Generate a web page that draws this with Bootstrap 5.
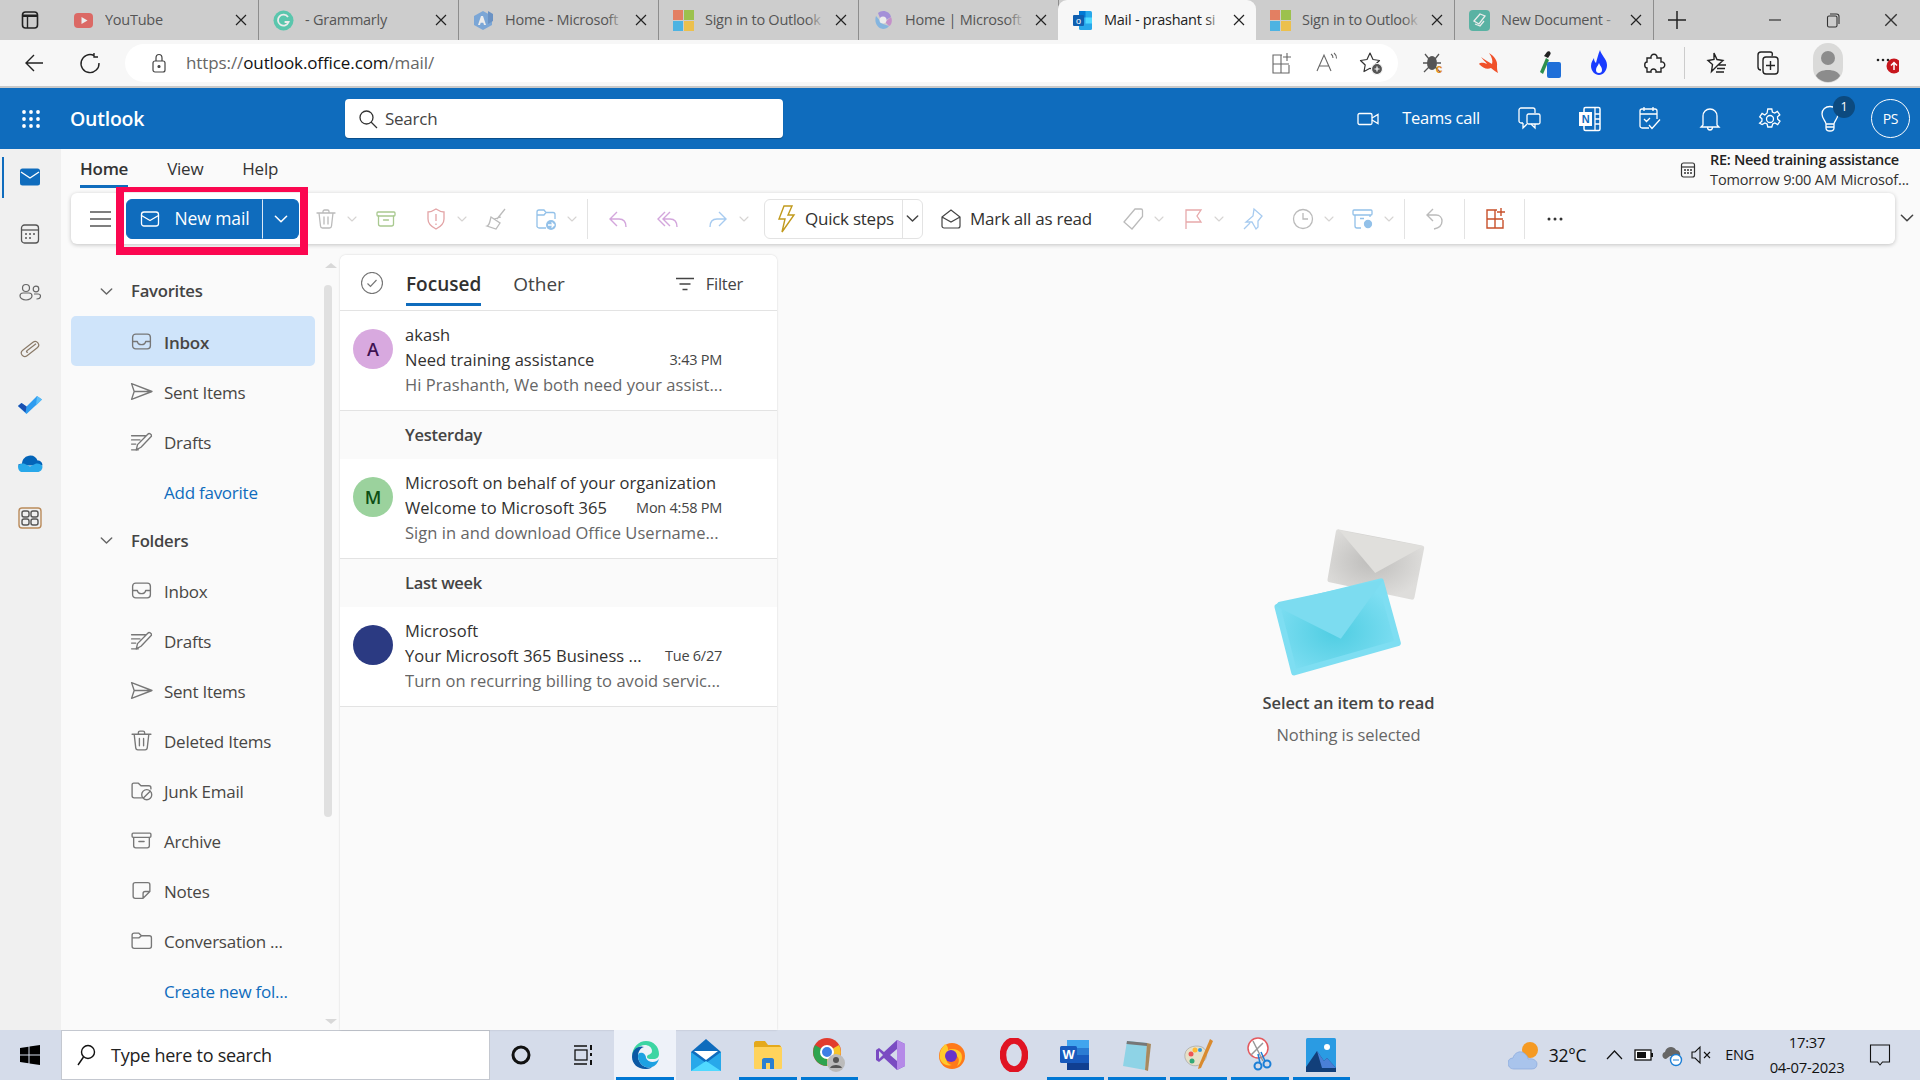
<!DOCTYPE html>
<html lang="en"><head><meta charset="utf-8"><title>Mail - Outlook</title>
<link href="https://cdn.jsdelivr.net/npm/bootstrap@5.3.0/dist/css/bootstrap.min.css" rel="stylesheet">
<style>
html,body{height:1080px;width:1920px;overflow:hidden}
body{font-family:"Open Sans","Noto Sans","Liberation Sans",sans-serif;font-size:16px;color:#323130;background:#fafafa;letter-spacing:-.25px}
svg{display:block;flex:none}
.ic-s{fill:none;stroke:currentColor;stroke-width:1.3;stroke-linecap:round;stroke-linejoin:round}
.app{height:1080px}
.symbols{position:absolute}
.minw0{min-width:0}
.tabstrip{height:40px;background:#cdcdcd;flex:none}
.tog{width:59px;height:40px;color:#222}
.btab{width:200px;height:40px;padding:0 10px 0 14px;color:#555;font-size:14.5px;border-right:1px solid #8d8d8d;background:none}
.btab.on{background:#f7f7f7;color:#222;border-radius:9px 9px 0 0;border-right:0;margin-left:-1px;width:198px}
.btab.aft{width:199px}
.btab .fav{width:21px;height:21px;opacity:.62;margin-right:11px}
.btab.on .fav{opacity:1}
.btab .ttl{flex:1;white-space:pre;overflow:hidden;position:relative}
.btab .ttl::after{content:"";position:absolute;right:0;top:0;bottom:0;width:18px;background:linear-gradient(90deg,transparent,#cdcdcd)}
.btab.on .ttl::after{background:linear-gradient(90deg,transparent,#f7f7f7)}
.btab .xx{width:14px;height:14px;margin-left:9px;color:#222}
.newtab{width:46px;height:40px;color:#222}
.winc{margin-left:auto}
.winc>div{width:58px;height:40px;color:#333}
.addr{height:48px;background:#f7f7f7;border-bottom:2px solid #c9c9c9;flex:none}
.navb{width:60px;color:#222}
.navb.bk{width:55px;margin-left:6px;margin-right:-1px}
.urlpill{width:1273px;height:38px;background:#fff;border-radius:19px;margin-left:5px;padding-left:26px;color:#666;font-size:17px;letter-spacing:-.1px}
.urlpill b{font-weight:400;color:#111}
.urlpill .lk{margin-right:19px;color:#444}
.pillr{margin-left:auto;gap:21px;padding-right:15px;color:#666}
.exts{margin-left:6px;color:#222}
.ext{width:58px}
.ext.e2{width:54px}
.ext.e3{width:64px}
.ext.e4{width:38px}
.ext.e5{width:40px;margin-left:16px}
.xsep{width:1px;height:32px;background:#ccc;margin:0 18px 0 10px}
.x-fav{width:24px}
.x-col{width:30px;margin-left:26px}
.x-prof{width:28px;margin-left:31px}
.x-more{width:40px;margin-left:33px;height:30px}
.oh{height:61px;background:#0f6cbd;color:#fff;flex:none}
.waffle{width:61px}
.brand{width:275px;margin-left:9px;font-size:19.5px;font-weight:600}
.searchb{width:438px;height:39px;background:#fff;border-radius:4px;color:#444;font-size:17px;padding-left:13px;gap:7px;box-shadow:0 1px 1px rgba(0,0,0,.3)}
.hright{margin-left:auto;color:#fff}
.hic{width:60px;position:relative}
.teams{font-size:16.5px;margin:0 20px 0 23px}
.ntf{position:absolute;top:-9px;left:33px;width:22px;height:22px;border-radius:50%;background:#0c4a7f;color:#fff;font-size:12.5px;line-height:22px;text-align:center}
.pers{width:39px;height:39px;border:1.5px solid #fff;border-radius:50%;font-size:14px;margin:0 10px 0 11px}
.rail{width:61px;background:#f0f0f0;flex:none;position:relative;color:#555;padding-right:2px}
.railb{height:57.5px;position:relative}
.railb.on{margin-top:-1px}
.railb.on::before{content:"";position:absolute;left:2px;top:9px;bottom:8px;width:2px;background:#0f6cbd}
.railb.tod{margin-top:-2px;margin-bottom:2px}
.railb.lst{margin-top:-4px}
.ribtabs{height:44px;padding-left:19px;gap:39px;font-size:17px;flex:none;position:relative}
.rtab{height:39px;padding-top:8px;color:#333;line-height:24px;border-bottom:3px solid transparent}
.rtab.on{font-weight:600;border-bottom-color:#0f6cbd}
.remind{margin-left:auto;margin-right:11px;gap:14px;font-size:14.5px;line-height:20px;margin-top:-2px;letter-spacing:-.15px}
.remind .tt{font-weight:600;color:#222;letter-spacing:-.3px}
.tb{height:51px;width:1824px;margin-left:10px;background:#fff;border-radius:6px;box-shadow:0 1px 4px rgba(0,0,0,.22);position:relative;flex:none}
.hmb{width:55px;padding-left:19px;color:#555}
.newbtn{width:173px;height:40px;margin-right:2px}
.newbtn .btn{--bs-btn-bg:#0f6cbd;--bs-btn-border-color:#0f6cbd;--bs-btn-hover-bg:#0f6cbd;--bs-btn-font-size:17.5px;padding:0;display:flex;align-items:center;justify-content:center;letter-spacing:-.1px}
.newbtn .mn{width:137px;gap:13px;padding-left:2px;padding-right:2px}
.newbtn .dd{width:37px;border-left:1px solid #dce9f5}
.rc{width:50px;height:51px;padding-left:14px}
.rc.dde{width:60px}
.rc .chv{margin-left:10px;color:#d6d4d2}
.c-del{color:#bbb}
.c-arc{color:#a9c990}
.ssep{width:1px;height:40px;background:#e3e3e3;margin:0 5px 0 6px}
.ssep.nr{margin:0 5px 0 4px}
.qs{width:159px;height:40px;border:1px solid #e3e3e3;border-radius:6px;margin:0 0 0 11px;font-size:17px;color:#323130;padding-left:10px}
.qs .dv{width:1px;height:40px;background:#e3e3e3;margin-left:auto}
.qs .cc{width:19px;color:#444}
.mar{font-size:17px;gap:8px;margin-left:17px;margin-right:16px;color:#323130}
.hilite{position:absolute;left:45px;top:-6px;width:192px;height:68px;border:solid #fb0750;border-width:5px 8px 8px 8px;pointer-events:none}
.farch{width:25px;padding-top:18px;padding-left:5px;color:#444;height:51px}
.work{min-height:0}
.fnav{width:279px;position:relative;color:#444;flex:none;padding-top:22px}
.fl{--bs-list-group-bg:transparent;--bs-list-group-border-width:0;width:244px;margin-left:10px}
.fl .list-group-item{height:50px;padding:0 0 0 59px;display:flex;align-items:center;gap:11px;font-size:17px;color:#484644;border-radius:5px}
.fl .list-group-item>span{padding-top:4px}
.fl .list-group-item svg{color:#777}
.fl .hdr{height:50px;padding-left:29px;font-weight:600;font-size:16.7px;gap:18px;color:#444}
.fl .hdr svg{color:#666}
.fl .hdr.hdb{height:49px}
.fl .act{background:#cfe4fa;font-weight:600}
.fl .lnk{color:#0f6cbd;padding-left:93px}
.sb{position:absolute;left:263px;top:41px;width:8px;height:532px;background:#e0e0e0;border-radius:4px}
.sba{position:absolute;left:264px;width:0;height:0;border-left:6px solid transparent;border-right:6px solid transparent}
.sba.u{top:19px;border-bottom:5px solid #d8d8d8}
.sba.d{bottom:6px;border-top:5px solid #d8d8d8}
.ml{width:437px;margin-top:11px;flex:none;--bs-card-border-width:0;--bs-card-border-radius:6px;--bs-card-inner-border-radius:6px;background:#fafafa;box-shadow:0 0 2px rgba(0,0,0,.18);overflow:hidden;border-radius:6px 6px 0 0}
.mlh{height:56px;background:#fff;border-bottom:1.5px solid #e3e3e3;padding-left:21px;flex:none;font-size:19px;letter-spacing:0}
.ftab{margin-left:32px;height:46px;padding-top:9px;line-height:30px;border-bottom:3px solid transparent;color:#444}
.ftab.on{margin-left:23px;border-bottom-color:#0f6cbd;font-weight:600;color:#323130}
.ftr{margin-left:auto;margin-right:34px;gap:12px;font-size:16.5px;color:#444;padding-top:3px;letter-spacing:-.25px}
.mg{--bs-list-group-border-width:0}
.grp{height:48px;padding-left:65px;padding-top:1px;background:#fafafa;font-weight:600;color:#444;font-size:16.5px;display:flex;align-items:center}
.mi{height:100px;background:#fff;border-bottom:1.5px solid #e3e3e3;padding:0 0 3px 13px;display:flex;align-items:center;gap:12px;font-size:16.5px;line-height:25px;color:#323130;letter-spacing:.05px}
.ava{width:40px;height:40px;border-radius:50%;font-weight:600;font-size:18px;flex:none;display:flex;align-items:center;justify-content:center;margin-bottom:20px}
.av-a{background:#d8a9df;color:#3f1252}
.av-m{background:#9bd29d;color:#0d4f14}
.av-b{background:#2b3a82}
.mt{width:317px;white-space:nowrap}
.mt .pv{color:#666;overflow:hidden}
.tm{margin-left:auto;font-size:14.5px;color:#444;letter-spacing:-.25px}
.rp{flex:1;padding-top:283px;text-align:center;color:#444;letter-spacing:-.1px}
.rp svg{margin:0 auto 14px}
.rp .a{font-weight:600;font-size:16.5px;line-height:24px;color:#444;margin-bottom:8px}
.rp .b{font-size:16.5px;line-height:24px;color:#666}
.taskb{height:50px;background:#d5dcea;flex:none;color:#111}
.st{width:61px;padding-right:2px}
.tsearch{width:429px;height:50px;background:#fff;border:1px solid #c4c8d0;font-size:18px;padding-left:14px;gap:15px;color:#222}
.tcell{width:61.5px;height:50px;position:relative}
.cort{width:62px}
.tcell.run::after{content:"";position:absolute;left:2px;right:2px;bottom:0;height:3px;background:#0078d4}
.tcell.act{background:#eef2f9}
.tray{margin-left:auto;color:#111}
.tray .tmp{font-size:17.5px;margin:0 14px 0 7px}
.tray .tr{width:29px}
.tray .eng{font-size:14.5px;margin:0 10px 0 9px}
.clk{font-size:14.8px;line-height:25px;text-align:center;width:86px;margin-right:19px}
.ntfb{margin-right:29px}
</style></head>
<body>
<svg class="symbols" width="0" height="0"><defs>
<symbol id="x" viewBox="0 0 14 14"><path d="M2 2l10 10M12 2L2 12" stroke="currentColor" stroke-width="1.2" fill="none"/></symbol>
<symbol id="chv" viewBox="0 0 10 10"><path d="M1 3l4 4 4-4" stroke="currentColor" stroke-width="1.1" fill="none" stroke-linecap="round" stroke-linejoin="round"/></symbol>
<symbol id="inbox" viewBox="0 0 22 22"><g class="ic-s"><rect x="2.5" y="4" width="17" height="14" rx="3"/><path d="M2.5 11h4.5c.4 2 2 3 4 3s3.600-1 4-3h4.500"/></g></symbol>
<symbol id="sent" viewBox="0 0 22 22"><g class="ic-s"><path d="M1.500 3.500L21 11 1.500 18.500 4 11zM4 11h17"/></g></symbol>
<symbol id="draft" viewBox="0 0 22 22"><g class="ic-s"><path d="M1.500 5.500h13M1.500 9.500h8M1.500 13.500h4M6 19l1.200-5L17 4c1.200-1.200 4-.4 3.500 2L10.500 16.500z"/><path d="M1.500 19H8"/></g></symbol>
<symbol id="trash" viewBox="0 0 22 22"><g class="ic-s"><path d="M2 5h18M8 5V3.500C8 2.700 8.700 2 9.500 2h3c.8 0 1.500.7 1.500 1.500V5M4 5l1.500 13c.1 1.200 1 2 2 2h7c1 0 1.900-.8 2-2L18 5M9 9v7M13 9v7"/></g></symbol>
<symbol id="junk" viewBox="0 0 22 22"><g class="ic-s"><path d="M11 18H4c-1.200 0-2-.8-2-2V5.500C2 4.500 2.800 4 3.500 4H8l2.500 2.500H18c1 0 2 .6 2 2v1"/><circle cx="16" cy="15" r="4.800"/><path d="M12.800 18.200l6.500-6.400"/></g></symbol>
<symbol id="arch" viewBox="0 0 22 22"><g class="ic-s"><rect x="2" y="4" width="18" height="4" rx="1"/><path d="M3.500 8v8c0 1.200.8 2 2 2h11c1.200 0 2-.8 2-2V8M8.500 12h5"/></g></symbol>
<symbol id="note" viewBox="0 0 22 22"><g class="ic-s"><path d="M5 3.500h12c1.200 0 2 .8 2 2V12l-6.500 6.500H5c-1.200 0-2-.8-2-2v-11c0-1.200.8-2 2-2zM19 12h-4.500c-1.200 0-2 .8-2 2v4.500"/></g></symbol>
<symbol id="fold" viewBox="0 0 22 22"><g class="ic-s"><path d="M2 16.500V6c0-1.200.8-2 2-2h4.500L11 6.500h7.500c1.200 0 2 .8 2 2v8c0 1.200-.8 2-2 2H4c-1.200 0-2-.8-2-2zM2 8.500h6.500L11 6.500"/></g></symbol>
<symbol id="env" viewBox="0 0 22 22"><g class="ic-s"><rect x="2.500" y="4" width="17" height="14" rx="2.500"/><path d="M2.500 7.500L11 12.500l8.500-5"/></g></symbol>
</defs></svg>

<div class="app d-flex flex-column">
 <!-- browser tabs -->
 <div class="tabstrip d-flex">
  <div class="tog d-flex align-items-center justify-content-center"><svg width="20" height="20" viewBox="0 0 20 20"><rect x="2.500" y="2" width="15" height="16" rx="3" fill="none" stroke="currentColor" stroke-width="1.600"/><path d="M3 4.500h14V7H3z" fill="currentColor"/><path d="M7.500 7v11" stroke="currentColor" stroke-width="1.400"/></svg></div>
  <div class="btab d-flex align-items-center"><svg class="fav" viewBox="0 0 21 21"><rect x="1" y="3" width="19" height="15" rx="4" fill="#e52d27"/><path d="M8.500 7l6 3.500-6 3.500z" fill="#fff"/></svg><span class="ttl">YouTube</span><svg class="xx"><use href="#x"/></svg></div>
  <div class="btab d-flex align-items-center"><svg class="fav" viewBox="0 0 21 21"><circle cx="10.500" cy="10.500" r="10" fill="#15c39a"/><path d="M15 7a5.500 5.500 0 1 0 .6 5h-4" fill="none" stroke="#fff" stroke-width="1.800"/></svg><span class="ttl">- Grammarly</span><svg class="xx"><use href="#x"/></svg></div>
  <div class="btab d-flex align-items-center"><svg class="fav" viewBox="0 0 21 21"><path d="M10 1l9 5v9l-9 5-9-5V6z" fill="#4a8fdc"/><path d="M15 1l5 3v7l-5 3z" fill="#2f6fc0"/><path d="M5 15l3-9h2l3 9h-2l-.7-2.200H7.700L7 15z" fill="#fff"/></svg><span class="ttl">Home - Microsoft</span><svg class="xx"><use href="#x"/></svg></div>
  <div class="btab d-flex align-items-center"><svg class="fav" viewBox="0 0 21 21"><rect width="10" height="10" fill="#f25022"/><rect x="11" width="10" height="10" fill="#7fba00"/><rect y="11" width="10" height="10" fill="#00a4ef"/><rect x="11" y="11" width="10" height="10" fill="#ffb900"/></svg><span class="ttl">Sign in to Outlook</span><svg class="xx"><use href="#x"/></svg></div>
  <div class="btab d-flex align-items-center"><svg class="fav" viewBox="0 0 21 21"><path d="M5 3c4-4 12-2 13 4l-5 3-6-2z" fill="#8c6be0"/><path d="M3 6c-2 6 1 12 7 13 2 0 5-1 6-3l-6-2z" fill="#5aa7ea"/><path d="M18 7c2 4 0 9-2 9l-4-4z" fill="#c06cc8"/><circle cx="10" cy="10" r="3.500" fill="#fff"/></svg><span class="ttl">Home | Microsoft</span><svg class="xx"><use href="#x"/></svg></div>
  <div class="btab on d-flex align-items-center"><svg class="fav" viewBox="0 0 21 21"><rect x="7" y="1" width="13" height="19" rx="1.500" fill="#28a8ea"/><rect x="7" y="1" width="6.500" height="6.500" fill="#0078d4"/><rect x="13.500" y="7.500" width="6.500" height="6" fill="#50d9ff"/><rect x="1" y="5" width="11" height="11" rx="1" fill="#0f5fb0"/><text x="6.500" y="14" font-size="9" fill="#fff" text-anchor="middle" font-family="Liberation Sans">o</text></svg><span class="ttl">Mail - prashant si</span><svg class="xx"><use href="#x"/></svg></div>
  <div class="btab aft d-flex align-items-center"><svg class="fav" viewBox="0 0 21 21"><rect width="10" height="10" fill="#f25022"/><rect x="11" width="10" height="10" fill="#7fba00"/><rect y="11" width="10" height="10" fill="#00a4ef"/><rect x="11" y="11" width="10" height="10" fill="#ffb900"/></svg><span class="ttl">Sign in to Outlook</span><svg class="xx"><use href="#x"/></svg></div>
  <div class="btab aft d-flex align-items-center"><svg class="fav" viewBox="0 0 21 21"><rect width="21" height="21" rx="4" fill="#15a38a"/><path d="M5 11l6-7 5 2-6 8zM6 14l5 2 4-5" stroke="#fff" stroke-width="1.300" fill="none"/></svg><span class="ttl">New Document -</span><svg class="xx"><use href="#x"/></svg></div>
  <div class="newtab d-flex align-items-center justify-content-center"><svg width="20" height="20" viewBox="0 0 20 20"><path d="M10 1v18M1 10h18" stroke="currentColor" stroke-width="1.500"/></svg></div>
  <div class="winc d-flex">
   <div class="d-flex align-items-center justify-content-center"><svg width="14" height="14" viewBox="0 0 14 14"><path d="M1 7h12" stroke="currentColor" stroke-width="1.200"/></svg></div>
   <div class="d-flex align-items-center justify-content-center"><svg width="16" height="16" viewBox="0 0 16 16" fill="none" stroke="currentColor" stroke-width="1.100"><rect x="2.500" y="4" width="9.500" height="11" rx="1.500"/><path d="M5 2h6.500c1.500 0 2.500 1 2.500 2.500V12"/></svg></div>
   <div class="d-flex align-items-center justify-content-center"><svg width="16" height="16"><use href="#x"/></svg></div>
  </div>
 </div>
 <!-- address bar -->
 <div class="addr d-flex align-items-center">
  <div class="navb bk d-flex justify-content-center"><svg width="22" height="22" viewBox="0 0 22 22" fill="none" stroke="currentColor" stroke-width="1.400"><path d="M20 11H3M11 3l-8 8 8 8"/></svg></div>
  <div class="navb d-flex justify-content-center"><svg width="22" height="22" viewBox="0 0 22 22" fill="none" stroke="currentColor" stroke-width="1.400"><path d="M15 3.500a9 9 0 1 0 5 7.500M15 1v4h4"/></svg></div>
  <div class="urlpill d-flex align-items-center">
   <svg class="lk" width="16" height="20" viewBox="0 0 16 20" fill="none" stroke="currentColor" stroke-width="1.200"><rect x="2" y="8" width="12" height="11" rx="2"/><path d="M5 8V5c0-2 1.300-3.500 3-3.500S11 3 11 5v3"/><circle cx="8" cy="13.500" r="1" fill="currentColor"/></svg>
   <span>https://<b>outlook.office.com</b>/mail/</span>
   <div class="pillr d-flex align-items-center">
    <svg width="24" height="24" viewBox="0 0 24 24" fill="none" stroke="currentColor" stroke-width="1.100"><path d="M13 4H4v18h16v-8M4 13h16M12 4v18M18 2v8M14 6h8"/></svg>
    <svg width="24" height="24" viewBox="0 0 24 24" fill="none" stroke="currentColor" stroke-width="1.100"><path d="M3 20L10 4l7 16M5.500 15h9M17 3c1.500 1 2 2.500 2 4M20 2c2 1.500 2.500 3.500 2.500 5.500"/></svg>
    <svg width="24" height="24" viewBox="0 0 24 24" fill="none" stroke="#333" stroke-width="1.200"><path d="M11 2l3 6.500 6.500 1-4.700 4.500 1.200 6.500-6-3.200-6 3.200 1.200-6.500L1.500 9.500l6.500-1z" stroke-linejoin="round"/><circle cx="18" cy="18" r="5.500" fill="#555" stroke="#f7f7f7"/><path d="M18 15.500v5M15.500 18h5" stroke="#fff"/></svg>
   </div>
  </div>
  <div class="exts d-flex align-items-center">
   <div class="ext d-flex justify-content-center"><svg width="26" height="26" viewBox="0 0 26 26"><ellipse cx="12" cy="13" rx="5" ry="7" fill="#555"/><path d="M5 4l4 5M19 4l-4 5M3 13h5M21 13h-4M4 22l5-5M20 22l-5-5" stroke="#555" stroke-width="1.300"/><text x="19" y="23" font-size="12" font-weight="700" fill="#e08a1e" text-anchor="middle" font-family="Liberation Sans">c</text></svg></div>
   <div class="ext e2 d-flex justify-content-center"><svg width="26" height="26" viewBox="0 0 26 26"><path d="M3 14c4 4 8 6 12 4 2 2 4 3 7 5-1-3-1-5-1-7 1-5-3-10-8-13 3 4 4 8 3 11C12 12 8 9 5 7c2 3 5 5 6 7-3-1-6-2-8 0z" fill="#f0512a"/></svg></div>
   <div class="ext e3 d-flex justify-content-center"><svg width="30" height="30" viewBox="0 0 30 30"><path d="M7 24L13 10l3 2-6 14z" fill="#2d8f4e"/><path d="M14 4c2-2 5 1 3 3l-2 3-4-2z" fill="#222"/><rect x="14" y="14" width="14" height="16" rx="2" fill="#1f6fd8"/></svg></div>
   <div class="ext e4 d-flex justify-content-center"><svg width="24" height="28" viewBox="0 0 24 28"><path d="M13 1c1 5 7 9 7 15 0 6-4 10-8 10s-8-4-8-9c0-4 2-6 3-8 0 3 1 4 2 5 1-4 2-8 4-13z" fill="#1a3cff"/><path d="M12 14c1 3 3 4 3 7 0 2-1 3-3 3s-3-1-3-3c0-3 2-4 3-7z" fill="#fff"/></svg></div>
   <div class="ext e5 d-flex justify-content-center"><svg width="24" height="24" viewBox="0 0 24 24" fill="none" stroke="currentColor" stroke-width="1.400"><path d="M5 7h4c-1-5 7-5 6 0h4v4c5-1 5 7 0 6v4h-5c1-4-6-4-5 0H5v-4c-3 0-3-6 0-6z"/></svg></div>
   <div class="xsep"></div>
   <div class="x-fav d-flex justify-content-center"><svg width="24" height="24" viewBox="0 0 24 24" fill="none" stroke="currentColor" stroke-width="1.400"><path d="M11 2l3 6.500 6 1-4.500 4-7 7 1-7-4.500-4 6-1zM15 14h8M14 17.500h8M13 21h8"/></svg></div>
   <div class="x-col d-flex justify-content-center"><svg width="26" height="28" viewBox="0 0 26 28" fill="none" stroke="currentColor" stroke-width="1.400"><rect x="8" y="8" width="15" height="17" rx="3"/><path d="M6 21c-2 0-3-1-3-3V6c0-2 1-3 3-3h9c2 0 3 1 2 4M15.500 12v9M11 16.500h9"/></svg></div>
   <div class="x-prof d-flex justify-content-center"><svg width="30" height="40" viewBox="0 0 30 40"><rect width="30" height="40" rx="15" fill="#dadad9"/><circle cx="15" cy="15" r="7" fill="#8c8c8c"/><path d="M3 33c2-8 22-8 24 0-6 8-18 8-24 0z" fill="#8c8c8c"/></svg></div>
   <div class="x-more d-flex align-items-center position-relative"><svg width="24" height="24" viewBox="0 0 24 24"><circle cx="3" cy="9" r="1.300" fill="#222"/><circle cx="8" cy="9" r="1.300" fill="#222"/><circle cx="13" cy="9" r="1.300" fill="#222"/><circle cx="19" cy="15" r="7.500" fill="#c7161d"/><path d="M19 19v-7M16 14.500l3-3 3 3" stroke="#fff" stroke-width="1.500" fill="none"/></svg></div>
  </div>
 </div>
 <!-- outlook header -->
 <div class="oh d-flex align-items-center">
  <div class="waffle d-flex justify-content-center"><svg width="20" height="20" viewBox="0 0 20 20" fill="#fff"><circle cx="3" cy="3" r="1.900"/><circle cx="10" cy="3" r="1.900"/><circle cx="17" cy="3" r="1.900"/><circle cx="3" cy="10" r="1.900"/><circle cx="10" cy="10" r="1.900"/><circle cx="17" cy="10" r="1.900"/><circle cx="3" cy="17" r="1.900"/><circle cx="10" cy="17" r="1.900"/><circle cx="17" cy="17" r="1.900"/></svg></div>
  <div class="brand">Outlook</div>
  <div class="searchb d-flex align-items-center"><svg width="20" height="20" viewBox="0 0 20 20" fill="none" stroke="#333" stroke-width="1.300"><circle cx="8.500" cy="8.500" r="6.500"/><path d="M13 13l6 6"/></svg><span>Search</span></div>
  <div class="hright d-flex align-items-center">
   <svg width="22" height="20" viewBox="0 0 22 20" fill="none" stroke="currentColor" stroke-width="1.300"><rect x="1" y="4.500" width="14" height="11" rx="1.500"/><path d="M15 9l6-3.500v9L15 11"/></svg>
   <div class="teams">Teams call</div>
   <div class="hic d-flex justify-content-center"><svg width="24" height="26" viewBox="0 0 24 26" fill="none" stroke="currentColor" stroke-width="1.300"><path d="M5 17H3c-1 0-2-1-2-2V4c0-1 1-2 2-2h12c1 0 2 1 2 2v3M5 17v5l4-4"/><rect x="9" y="8" width="13" height="10" rx="1.500"/><path d="M17 18v4l-4-4"/></svg></div>
   <div class="hic d-flex justify-content-center"><svg width="24" height="26" viewBox="0 0 24 26"><rect x="6" y="1.500" width="16" height="23" rx="1.500" fill="none" stroke="currentColor" stroke-width="1.500"/><path d="M17 2v22M17 8h5M17 13h5M17 18h5" stroke="currentColor" stroke-width="1.300"/><rect x="1" y="6" width="13" height="14" fill="#fff"/><text x="7.500" y="17" font-size="11" font-weight="700" fill="#0f6cbd" text-anchor="middle" font-family="Liberation Sans">N</text></svg></div>
   <div class="hic d-flex justify-content-center"><svg width="24" height="26" viewBox="0 0 24 26" fill="none" stroke="currentColor" stroke-width="1.300"><path d="M11 22H4c-1 0-2-1-2-2V5c0-1 1-2 2-2h13c1 0 2 1 2 2v8M2 8h17M6 1v4M15 1v4M6 13l2.500 2.500L12 12M11 19l3 3.500 8-9"/></svg></div>
   <div class="hic d-flex justify-content-center"><svg width="22" height="26" viewBox="0 0 22 26" fill="none" stroke="currentColor" stroke-width="1.300"><path d="M4 19V10c0-4 3-7 7-7s7 3 7 7v9l2 2H2zM8.500 21c0 2 1 3 2.500 3s2.500-1 2.500-3"/></svg></div>
   <div class="hic d-flex justify-content-center"><svg width="24" height="24" viewBox="0 0 24 24" fill="none" stroke="currentColor" stroke-width="1.300"><circle cx="12" cy="12" r="3.500"/><path d="M10 2h4l.6 3 2.300 1 2.700-1.600 2.400 3.400-2.300 2 .2 2.400 2.300 2-2.300 3.400-2.800-1.600-2.200 1-.9 3h-4l-.7-3-2.200-1-2.800 1.600L1.800 16.200l2.300-2 .1-2.400-2.300-2L4.300 6.400 7 8l2.300-2z" transform="translate(-.2 0)"/></svg></div>
   <div class="hic d-flex justify-content-center"><svg width="22" height="28" viewBox="0 0 22 28" fill="none" stroke="currentColor" stroke-width="1.300"><path d="M7 19c0-3-4-5-4-10 0-4.500 3.500-7.500 8-7.500s8 3 8 7.500c0 5-4 7-4 10zM7 19v4c0 2 2 3 4 3s4-1 4-3v-4M7 22h8"/></svg><div class="ntf">1</div></div>
   <div class="pers d-flex align-items-center justify-content-center">PS</div>
  </div>
 </div>
 <!-- main -->
 <div class="d-flex flex-grow-1 work">
  <div class="rail d-flex flex-column align-items-center">
   <div class="railb on w-100 d-flex align-items-center justify-content-center"><svg width="22" height="20" viewBox="0 0 22 20"><rect x="1" y="1.500" width="20" height="17" rx="2.500" fill="#0f6cbd"/><path d="M2 5l9 6 9-6" fill="none" stroke="#fff" stroke-width="1.400"/></svg></div>
   <div class="railb w-100 d-flex align-items-center justify-content-center"><svg width="20" height="22" viewBox="0 0 20 22" fill="none" stroke="#555" stroke-width="1.300"><rect x="1.500" y="2" width="17" height="18" rx="3"/><path d="M2 7h16"/><g fill="#555" stroke="none"><circle cx="6" cy="11" r="1"/><circle cx="10" cy="11" r="1"/><circle cx="14" cy="11" r="1"/><circle cx="6" cy="15" r="1"/><circle cx="10" cy="15" r="1"/></g></svg></div>
   <div class="railb w-100 d-flex align-items-center justify-content-center"><svg width="24" height="20" viewBox="0 0 24 20" fill="none" stroke="#666" stroke-width="1.200"><circle cx="8" cy="6" r="3.500"/><circle cx="18" cy="7" r="2.800"/><path d="M2 14c0-2 1-3 3-3h6c2 0 3 1 3 3 0 2-2.500 4-6 4s-6-2-6-4zM16 12h4c1.500 0 2.500 1 2.500 2 0 2-2 3-4 3"/></svg></div>
   <div class="railb w-100 d-flex align-items-center justify-content-center"><svg width="20" height="20" viewBox="0 0 20 20" fill="none" stroke="#8a7a68" stroke-width="1.200"><g transform="rotate(-38 10 10)"><rect x="0" y="6.500" width="20" height="7" rx="3.500"/><path d="M18 9.500H6.500c-1.300 0-1.300 1.500 0 1.500"/></g></svg></div>
   <div class="railb tod w-100 d-flex align-items-center justify-content-center"><svg width="26" height="20" viewBox="0 0 26 20"><path d="M1 11l3.500-3 5 3.500L20 1l5 3.500L9.500 19z" fill="#2e9cf0"/><path d="M1 11l3.500-3 5 3.500-1 6z" fill="#1a4fb0"/><path d="M20 1l5 3.500-6 6z" fill="#5bbdf7"/></svg></div>
   <div class="railb w-100 d-flex align-items-center justify-content-center"><svg width="26" height="18" viewBox="0 0 26 18"><path d="M5 9C5 4 9 .5 13.500.5c3.500 0 6 2 7 5 3 0 5 2 5 5H1c0-1 2-2 4-1.500z" fill="#0364b8"/><path d="M1 11c1-2 4-3 7-2l5 2.500L18 9c3-1 6 0 7.500 2.500 0 3-2 5.500-5 5.500H5c-2.500 0-4-2.500-4-6z" fill="#28a8ea"/></svg></div>
   <div class="railb lst w-100 d-flex align-items-center justify-content-center"><svg width="24" height="22" viewBox="0 0 24 22" fill="none" stroke="#555" stroke-width="1.400"><rect x="1" y="1" width="22" height="20" rx="3" stroke="#b98a5a"/><rect x="4" y="4" width="7" height="6" rx="2"/><rect x="13" y="4" width="7" height="6" rx="2"/><rect x="4" y="12" width="7" height="6" rx="2"/><rect x="13" y="12" width="7" height="6" rx="2"/></svg></div>
  </div>
  <div class="d-flex flex-column flex-grow-1 minw0">
   <div class="ribtabs d-flex">
    <div class="rtab on">Home</div><div class="rtab">View</div><div class="rtab">Help</div>
    <div class="remind d-flex align-items-center"><svg width="16" height="18" viewBox="0 0 16 18" fill="none" stroke="#333" stroke-width="1.200"><rect x="1.500" y="2" width="13" height="14" rx="2"/><path d="M2 6h12"/><path d="M4 9h2M7 9h2M10 9h2M4 12h2M7 12h2M10 12h2" stroke-width="1.400"/></svg><div><div class="tt">RE: Need training assistance</div><div>Tomorrow 9:00 AM Microsof...</div></div></div>
   </div>
   <div class="d-flex">
   <div class="tb d-flex align-items-center">
    <div class="hmb"><svg width="21" height="18" viewBox="0 0 21 18" stroke="currentColor" stroke-width="1.400"><path d="M0 2h21M0 9h21M0 16h21"/></svg></div>
    <div class="btn-group newbtn">
     <button class="btn btn-primary mn" type="button"><svg width="22" height="22"><use href="#env"/></svg>New mail</button>
     <button class="btn btn-primary dd" type="button"><svg width="14" height="14"><use href="#chv"/></svg></button>
    </div>
    <div class="rc dde c-del d-flex align-items-center"><svg width="22" height="24"><use href="#trash"/></svg><svg class="chv" width="10" height="10"><use href="#chv"/></svg></div>
    <div class="rc c-arc d-flex align-items-center"><svg width="22" height="24"><use href="#arch"/></svg></div>
    <div class="rc dde d-flex align-items-center"><svg width="22" height="24" viewBox="0 0 22 24" fill="none" stroke="#e3a4a6" stroke-width="1.300"><path d="M11 2c3 2 5 3 8 3v7c0 5-4 8-8 10-4-2-8-5-8-10V5c3 0 5-1 8-3zM11 7v7M11 16.500v1.500"/></svg><svg class="chv" width="10" height="10"><use href="#chv"/></svg></div>
    <div class="rc d-flex align-items-center"><svg width="22" height="24" viewBox="0 0 22 24" fill="none" stroke="#bbb" stroke-width="1.300"><path d="M20 2l-8 10M6 10l9 6-4 6-9-3c3-1 3-6 4-9zM9 12l7-2"/></svg></div>
    <div class="rc dde d-flex align-items-center"><svg width="22" height="24" viewBox="0 0 22 24" fill="none" stroke="#93c1e9" stroke-width="1.300"><path d="M2 20V5c0-1 1-2 2-2h5l2 2.500h7c1 0 2 1 2 2V12M2 8h7l2-2.500M11 21H4c-1 0-2-1-2-2"/><circle cx="16" cy="18" r="5" fill="#93c1e9" stroke="none"/><path d="M13 18h6M16.500 15.500L19 18l-2.500 2.500" stroke="#fff"/></svg><svg class="chv" width="10" height="10"><use href="#chv"/></svg></div>
    <div class="ssep"></div>
    <div class="rc d-flex align-items-center"><svg width="22" height="24" viewBox="0 0 22 24" fill="none" stroke="#d3a6dc" stroke-width="1.400"><path d="M10 5L3 12l7 7M3 12h9c4 0 7 2 7 8"/></svg></div>
    <div class="rc d-flex align-items-center"><svg width="22" height="24" viewBox="0 0 22 24" fill="none" stroke="#d3a6dc" stroke-width="1.400"><path d="M8 5l-7 7 7 7M13 5l-7 7 7 7M6 12h7c4 0 7 2 7 8"/></svg></div>
    <div class="rc dde d-flex align-items-center"><svg width="22" height="24" viewBox="0 0 22 24" fill="none" stroke="#a7cbf0" stroke-width="1.400"><path d="M12 5l7 7-7 7M19 12h-9c-4 0-7 2-7 8"/></svg><svg class="chv" width="10" height="10"><use href="#chv"/></svg></div>
    <div class="qs d-flex align-items-center"><svg width="22" height="28" viewBox="0 0 22 28" fill="none" stroke="#c19a1d" stroke-width="1.400" class="me-2"><path d="M9 1h8l-4 9h6L7 27l3-13H4z"/></svg>Quick steps<div class="dv"></div><div class="cc d-flex justify-content-center"><svg width="13" height="13"><use href="#chv"/></svg></div></div>
    <div class="mar d-flex align-items-center"><svg width="22" height="22" viewBox="0 0 22 22" fill="none" stroke="#444" stroke-width="1.200"><path d="M2 9l9-7 9 7v9c0 1-1 2-2 2H4c-1 0-2-1-2-2zM2 9l9 5 9-5"/></svg>Mark all as read</div>
    <div class="rc dde d-flex align-items-center"><svg width="22" height="24" viewBox="0 0 22 24" fill="none" stroke="#bbb" stroke-width="1.300"><path d="M13 2h6c1 0 1.500.5 1.500 1.500v6L10 22 2 15zM16 6h.1"/></svg><svg class="chv" width="10" height="10"><use href="#chv"/></svg></div>
    <div class="rc dde d-flex align-items-center"><svg width="22" height="24" viewBox="0 0 22 24" fill="none" stroke="#e7a9ab" stroke-width="1.300"><path d="M4 22V3h15l-4 6 4 6H4"/></svg><svg class="chv" width="10" height="10"><use href="#chv"/></svg></div>
    <div class="rc d-flex align-items-center"><svg width="22" height="24" viewBox="0 0 22 24" fill="none" stroke="#a7cbf0" stroke-width="1.300"><path d="M12 2l-1 7-7 6h6l4 7 2-2v-6l4-5zM2 22l6-6"/></svg></div>
    <div class="rc dde d-flex align-items-center"><svg width="22" height="24" viewBox="0 0 22 24" fill="none" stroke="#bbb" stroke-width="1.300"><circle cx="11" cy="12" r="9.500"/><path d="M11 6v6h5"/></svg><svg class="chv" width="10" height="10"><use href="#chv"/></svg></div>
    <div class="rc dde d-flex align-items-center"><svg width="22" height="24" viewBox="0 0 22 24" fill="none" stroke="#93c1e9" stroke-width="1.300"><rect x="1" y="3" width="19" height="5" rx="1"/><path d="M3 8v11c0 1 1 2 2 2h4M18 8v2M8 11.500h4"/><circle cx="16" cy="17" r="3.500" fill="#93c1e9"/></svg><svg class="chv" width="10" height="10"><use href="#chv"/></svg></div>
    <div class="ssep"></div>
    <div class="rc d-flex align-items-center"><svg width="22" height="24" viewBox="0 0 22 24" fill="none" stroke="#bbb" stroke-width="1.400"><path d="M9 2L3 8l6 6M3 8h9c4 0 6 3 6 6 0 4-3 7-8 8"/></svg></div>
    <div class="ssep nr"></div>
    <div class="rc d-flex align-items-center"><svg width="22" height="24" viewBox="0 0 22 24" fill="none" stroke="#c8502a" stroke-width="1.400"><path d="M13 3H3v18h16v-8M3 12h16M11 3v18M17 1v8M13 5h8"/></svg></div>
    <div class="ssep nr"></div>
    <div class="rc d-flex align-items-center"><svg width="22" height="24" viewBox="0 0 22 24" fill="#333"><circle cx="5" cy="12" r="1.500"/><circle cx="11" cy="12" r="1.500"/><circle cx="17" cy="12" r="1.500"/></svg></div>
    <div class="hilite"></div>
   </div>
   <div class="farch"><svg width="14" height="14"><use href="#chv"/></svg></div>
   </div>
   <div class="d-flex flex-grow-1 work">
    <nav class="fnav">
     <div class="list-group fl">
      <div class="list-group-item hdr"><svg width="13" height="13"><use href="#chv"/></svg>Favorites</div>
      <div class="list-group-item act"><svg width="23" height="23"><use href="#inbox"/></svg><span>Inbox</span></div>
      <div class="list-group-item"><svg width="23" height="23"><use href="#sent"/></svg><span>Sent Items</span></div>
      <div class="list-group-item"><svg width="23" height="23"><use href="#draft"/></svg><span>Drafts</span></div>
      <div class="list-group-item lnk"><span>Add favorite</span></div>
      <div class="list-group-item hdr hdb"><svg width="13" height="13"><use href="#chv"/></svg>Folders</div>
      <div class="list-group-item"><svg width="23" height="23"><use href="#inbox"/></svg><span>Inbox</span></div>
      <div class="list-group-item"><svg width="23" height="23"><use href="#draft"/></svg><span>Drafts</span></div>
      <div class="list-group-item"><svg width="23" height="23"><use href="#sent"/></svg><span>Sent Items</span></div>
      <div class="list-group-item"><svg width="23" height="23"><use href="#trash"/></svg><span>Deleted Items</span></div>
      <div class="list-group-item"><svg width="23" height="23"><use href="#junk"/></svg><span>Junk Email</span></div>
      <div class="list-group-item"><svg width="23" height="23"><use href="#arch"/></svg><span>Archive</span></div>
      <div class="list-group-item"><svg width="23" height="23"><use href="#note"/></svg><span>Notes</span></div>
      <div class="list-group-item"><svg width="23" height="23"><use href="#fold"/></svg><span>Conversation ...</span></div>
      <div class="list-group-item lnk"><span>Create new fol...</span></div>
     </div>
     <div class="sba u"></div><div class="sb"></div><div class="sba d"></div>
    </nav>
    <section class="card ml">
     <div class="mlh d-flex align-items-center">
      <svg width="22" height="22" viewBox="0 0 22 22" fill="none" stroke="#777" stroke-width="1.200"><circle cx="11" cy="11" r="10.500"/><path d="M6.500 11.500l3 3 6-6.500"/></svg>
      <div class="ftab on">Focused</div><div class="ftab">Other</div>
      <div class="ftr d-flex align-items-center"><svg width="18" height="14" viewBox="0 0 18 14" stroke="#444" stroke-width="1.500"><path d="M0 1.500h18M3.500 7h11M6.500 12.500h5"/></svg>Filter</div>
     </div>
     <div class="list-group list-group-flush mg">
      <div class="mi"><div class="ava av-a">A</div><div class="mt"><div>akash</div><div class="d-flex"><span>Need training assistance</span><span class="tm">3:43 PM</span></div><div class="pv">Hi Prashanth, We both need your assist...</div></div></div>
      <div class="grp">Yesterday</div>
      <div class="mi"><div class="ava av-m">M</div><div class="mt"><div>Microsoft on behalf of your organization</div><div class="d-flex"><span>Welcome to Microsoft 365</span><span class="tm">Mon 4:58 PM</span></div><div class="pv">Sign in and download Office Username...</div></div></div>
      <div class="grp">Last week</div>
      <div class="mi"><div class="ava av-b"></div><div class="mt"><div>Microsoft</div><div class="d-flex"><span>Your Microsoft 365 Business ...</span><span class="tm">Tue 6/27</span></div><div class="pv">Turn on recurring billing to avoid servic...</div></div></div>
     </div>
    </section>
    <section class="rp">
     <svg width="157" height="150" viewBox="150 80 470 450">
      <defs>
       <radialGradient id="g1" cx=".45" cy=".45" r=".6"><stop offset="0" stop-color="#bebdbb"/><stop offset="1" stop-color="#dedddb"/></radialGradient>
       <radialGradient id="g2" cx=".48" cy=".55" r=".55"><stop offset="0" stop-color="#4fcde2"/><stop offset="1" stop-color="#7edef2"/></radialGradient>
      </defs>
      <path d="M355 95L604 143 575 290 330 238z" fill="url(#g1)" stroke="url(#g1)" stroke-width="16" stroke-linejoin="round"/>
      <path d="M357 90L465 218 610 138z" fill="#e0dfdc"/>
      <path d="M172 320L482 243 533 428 222 516z" fill="url(#g2)" stroke="#7edef2" stroke-width="18" stroke-linejoin="round"/>
      <path d="M165 316L362 415 490 238 175 305z" fill="#7cdcf0"/>
     </svg>
     <div class="a">Select an item to read</div>
     <div class="b">Nothing is selected</div>
    </section>
   </div>
  </div>
 </div>
 <!-- taskbar -->
 <div class="taskb d-flex align-items-center">
  <div class="st d-flex justify-content-center"><svg width="20" height="20" viewBox="0 0 20 20" fill="#000"><path d="M0 3l8.500-1.200V9.500H0zM9.500 1.600L20 0v9.500H9.500zM0 10.500h8.500v7.700L0 17zM9.500 10.500H20V20L9.500 18.400z"/></svg></div>
  <div class="tsearch d-flex align-items-center"><svg width="20" height="24" viewBox="0 0 20 24" fill="none" stroke="#111" stroke-width="1.400"><circle cx="12" cy="9" r="6.500"/><path d="M7.500 14L2 22"/></svg><span>Type here to search</span></div>
  <div class="cort d-flex justify-content-center"><svg width="20" height="20" viewBox="0 0 20 20" fill="none" stroke="#111" stroke-width="3"><circle cx="10" cy="10" r="8"/></svg></div>
  <div class="cort d-flex justify-content-center"><svg width="22" height="22" viewBox="0 0 22 22" fill="none" stroke="#111" stroke-width="1.300"><path d="M2 2h13M2 20h13"/><rect x="3" y="6" width="12" height="10"/><path d="M19 1v5M19 9v3M19 16v5" stroke-width="2"/></svg></div>
  <div class="tcell act run d-flex align-items-center justify-content-center"><svg width="30" height="30" viewBox="0 0 30 30"><path d="M2 17C2 7 9 1 16 1c8 0 13 6 13 13 0 3-2 5-6 5-3 0-6 0-6-2 0-3 5-2 5-6 0-4-4-6-7-6C9 5 3 10 2 17z" fill="#3dd5a3"/><path d="M2 17c0-8 7-12 12-10-4 1-6 5-6 9 0 7 6 13 14 11-2 2-5 2-7 2C8 29 2 24 2 17z" fill="#0c59a4"/><path d="M8 16c0 7 6 13 14 11 3-1 6-4 7-8-3 4-11 4-13-1 0-2-1-4-3-5-3-1-5 0-5 3z" fill="#1da1e2"/></svg></div>
  <div class="tcell d-flex align-items-center justify-content-center"><svg width="30" height="32" viewBox="0 0 30 32"><path d="M0 13L15 0l15 13v19H0z" fill="#0f6cbd"/><path d="M0 13l15 11 15-11v19H0z" fill="#28a8ea"/><path d="M3 12h24l-12 9z" fill="#fff"/><path d="M0 32l15-10 15 10z" fill="#50d9ff"/></svg></div>
  <div class="tcell run d-flex align-items-center justify-content-center"><svg width="30" height="30" viewBox="0 0 30 30"><path d="M1 3c0-1 1-2 2-2h9l3 4h11c1 0 2 1 2 2v3H1z" fill="#e5a91a"/><rect x="1" y="7" width="28" height="22" rx="1" fill="#ffd35c"/><path d="M9 29v-9c0-1 1-2 2-2h8c1 0 2 1 2 2v9h-4v-6h-4v6z" fill="#2b7fd1"/></svg></div>
  <div class="tcell run d-flex align-items-center justify-content-center"><svg width="34" height="36" viewBox="0 0 34 36"><circle cx="15" cy="15" r="14" fill="#e23b2e"/><path d="M15 15L27 8a14 14 0 0 1-12 21z" fill="#f7c52a"/><path d="M15 15L3 8a14 14 0 0 0 12 21z" fill="#2ea44f"/><circle cx="15" cy="15" r="6" fill="#3d7fe6" stroke="#fff" stroke-width="2"/><circle cx="24" cy="26" r="9" fill="#bbb"/><circle cx="24" cy="23" r="3" fill="#555"/><path d="M18 31c1-4 11-4 12 0z" fill="#555"/></svg></div>
  <div class="tcell d-flex align-items-center justify-content-center"><svg width="30" height="32" viewBox="0 0 30 32"><path d="M21 1l8 4v22l-8 4-13-12-5 4-3-2V11l3-2 5 4z" fill="#7a4bc2"/><path d="M21 1l8 4v22l-8 4z" fill="#b58ae8"/><path d="M3 12v8l4-4zM21 10l-7 6 7 6z" fill="#d5dcea"/></svg></div>
  <div class="tcell d-flex align-items-center justify-content-center"><svg width="30" height="30" viewBox="0 0 30 30"><circle cx="15" cy="16" r="13" fill="#ff7a1a"/><path d="M8 4c3 2 3 4 3 6 4-2 10-1 13 3 2 4 1 10-4 13 5-8-1-14-8-10-4 3-3 8 3 9-7 2-14-4-12-11 0-4 3-7 5-10z" fill="#ffc92c"/><circle cx="14" cy="16" r="6" fill="#6733c9"/></svg></div>
  <div class="tcell d-flex align-items-center justify-content-center"><svg width="28" height="34" viewBox="0 0 28 34"><ellipse cx="14" cy="17" rx="11" ry="14.500" fill="none" stroke="#e01423" stroke-width="6.500"/></svg></div>
  <div class="tcell run d-flex align-items-center justify-content-center"><svg width="32" height="32" viewBox="0 0 32 32"><rect x="8" y="1" width="22" height="30" rx="2" fill="#2b7cd3"/><rect x="8" y="1" width="22" height="8" fill="#41a5ee"/><rect x="8" y="16" width="22" height="8" fill="#185abd"/><rect x="8" y="24" width="22" height="7" fill="#103f91"/><rect x="1" y="7" width="17" height="17" rx="1.500" fill="#185abd"/><text x="9.500" y="20" font-size="13" font-weight="700" fill="#fff" text-anchor="middle" font-family="Liberation Sans">W</text></svg></div>
  <div class="tcell run d-flex align-items-center justify-content-center"><svg width="30" height="34" viewBox="0 0 30 34"><path d="M5 3l20 2-2 27L1 28z" fill="#8ed3e6"/><path d="M25 5l4 1-3 27-3-1z" fill="#a88a5e"/><path d="M5 3l20 2 0 3L4.500 6z" fill="#777"/></svg></div>
  <div class="tcell run d-flex align-items-center justify-content-center"><svg width="32" height="34" viewBox="0 0 32 34"><path d="M3 20C1 10 12 6 20 9c6 3 6 11 1 15-5 6-15 5-18-4z" fill="#e6e0c8" stroke="#999" stroke-width=".6"/><circle cx="9" cy="16" r="2.500" fill="#e55"/><circle cx="13" cy="12" r="2.500" fill="#fb3"/><circle cx="10" cy="23" r="2.500" fill="#3a7"/><circle cx="18" cy="12" r="2" fill="#39d"/><path d="M28 1l3 2-12 27-3 1 1-4z" fill="#d98a2e"/></svg></div>
  <div class="tcell run d-flex align-items-center justify-content-center"><svg width="30" height="36" viewBox="0 0 30 36"><ellipse cx="13" cy="11" rx="10" ry="10" fill="#fff" stroke="#e35a5f" stroke-width="1.500"/><path d="M6 18L18 6M8 4l10 20" stroke="#999" stroke-width="1.500"/><circle cx="13" cy="29" r="3.500" fill="none" stroke="#1c7fd6" stroke-width="2"/><circle cx="22" cy="27" r="3.500" fill="none" stroke="#1c7fd6" stroke-width="2"/><path d="M15 26l-2-9M20 24l-4-9" stroke="#1c7fd6" stroke-width="1.500"/></svg></div>
  <div class="tcell run d-flex align-items-center justify-content-center"><svg width="30" height="34" viewBox="0 0 30 34"><rect width="30" height="34" rx="1.500" fill="#2a9be3"/><circle cx="21" cy="9" r="3" fill="#fff"/><path d="M0 29l11-16 7 10 3-3 9 10v4H0z" fill="#123f7a"/><path d="M11 13l7 10 3-3 9 10H16z" fill="#4a7fd6"/></svg></div>
  <div class="tray d-flex align-items-center">
   <svg width="34" height="32" viewBox="0 0 34 32"><circle cx="22" cy="11" r="8" fill="#f59a23"/><path d="M6 30c-4 0-6-3-6-6s2-5 5-5c1-5 7-8 11-5 3 2 4 4 4 6 4-1 9 1 9 5 0 3-2 5-5 5z" fill="#a9c4ec" stroke="#8aa9dc" stroke-width=".7"/></svg>
   <div class="tmp">32°C</div>
   <div class="tr d-flex justify-content-center"><svg width="17" height="12" viewBox="0 0 17 12" fill="none" stroke="#111" stroke-width="1.200"><path d="M1 10l7.500-8L16 10"/></svg></div>
   <div class="tr d-flex justify-content-center"><svg width="20" height="14" viewBox="0 0 20 14"><rect x="1" y="2" width="16" height="10" fill="#fff" stroke="#111" stroke-width="1.300"/><rect x="3" y="4" width="9" height="6" fill="#111"/><rect x="17" y="5" width="2" height="4" fill="#111"/></svg></div>
   <div class="tr d-flex justify-content-center"><svg width="24" height="24" viewBox="0 0 24 24"><path d="M5 16c-4 0-5-6-1-7 1-5 8-7 11-2 3 0 5 3 4 6H9z" fill="#666"/><circle cx="15" cy="17" r="5.500" fill="#fff" stroke="#1c7fd6" stroke-width="1.400"/><path d="M12 17h6" stroke="#1c7fd6"/></svg></div>
   <div class="tr d-flex justify-content-center"><svg width="22" height="20" viewBox="0 0 22 20" fill="none" stroke="#111" stroke-width="1.100"><path d="M1 7v6h3l5 5V2L4 7zM13 7l6 6M19 7l-6 6"/></svg></div>
   <div class="eng">ENG</div>
   <div class="clk"><div>17:37</div><div>04-07-2023</div></div>
   <div class="ntfb"><svg width="22" height="24" viewBox="0 0 22 24" fill="none" stroke="#111" stroke-width="1.100"><path d="M1.500 2h19v17h-7l-2.500 3-2.500-3h-7z"/></svg></div>
  </div>
 </div>
</div>
<script src="https://cdn.jsdelivr.net/npm/bootstrap@5.3.0/dist/js/bootstrap.bundle.min.js"></script>
</body></html>
